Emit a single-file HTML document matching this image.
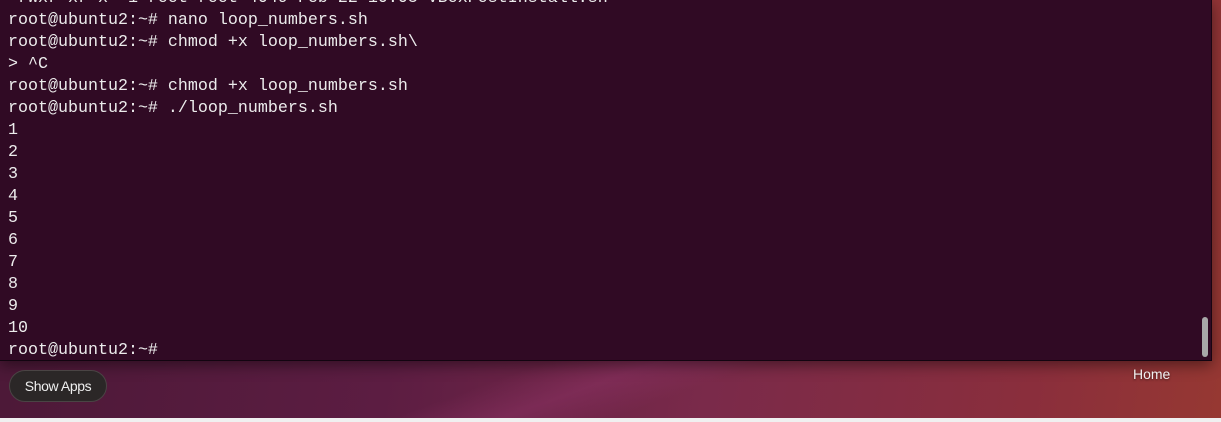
<!DOCTYPE html>
<html><head><style>
body{margin:0;width:1221px;height:422px;overflow:hidden;position:relative;background:#f0f0f0}
#desk{position:absolute;left:0;top:0;width:1221px;height:418px;background:linear-gradient(100deg,#4a1836 0%,#5c1d42 35%,#7a2a4a 60%,#8a2e3c 85%,#963832 100%)}
#streak{position:absolute;left:0;top:360px;width:1221px;height:58px;background:linear-gradient(160deg,transparent 0,transparent 40%,rgba(140,50,100,.5) 48%,transparent 56%)}
#term{position:absolute;left:0;top:0;width:1211px;height:360px;background:#300a24;border-right:1px solid #1a0512;border-bottom:1px solid #120410;box-shadow:0 4px 14px rgba(0,0,0,.45);overflow:hidden}
pre{position:absolute;left:8px;top:-12px;margin:0;font-family:"Liberation Mono",monospace;font-size:16.67px;line-height:22px;color:#ececec}
#sb{position:absolute;left:1202px;top:317px;width:6px;height:40px;border-radius:3px;background:#a8a8a8}
#apps{position:absolute;left:9px;top:370px;width:98px;height:32px;border-radius:16px;background:#2b2727;border:1px solid #4a4444;box-sizing:border-box;color:#eee;font:14px "Liberation Sans",sans-serif;line-height:30px;text-align:center;letter-spacing:-.4px}
#home{position:absolute;left:1133px;top:366px;color:#f0f0f0;font:14px "Liberation Sans",sans-serif;text-shadow:0 1px 2px rgba(0,0,0,.5)}
</style></head><body>
<div id="desk"></div><div id="streak"></div>
<div id="term"><pre>-rwxr-xr-x  1 root root 4049 Feb 22 10:05 VBoxPostInstall.sh
root@ubuntu2:~# nano loop_numbers.sh
root@ubuntu2:~# chmod +x loop_numbers.sh\
&gt; ^C
root@ubuntu2:~# chmod +x loop_numbers.sh
root@ubuntu2:~# ./loop_numbers.sh
1
2
3
4
5
6
7
8
9
10
root@ubuntu2:~# </pre><div id="sb"></div></div>
<div id="apps">Show Apps</div>
<div id="home">Home</div>
</body></html>
